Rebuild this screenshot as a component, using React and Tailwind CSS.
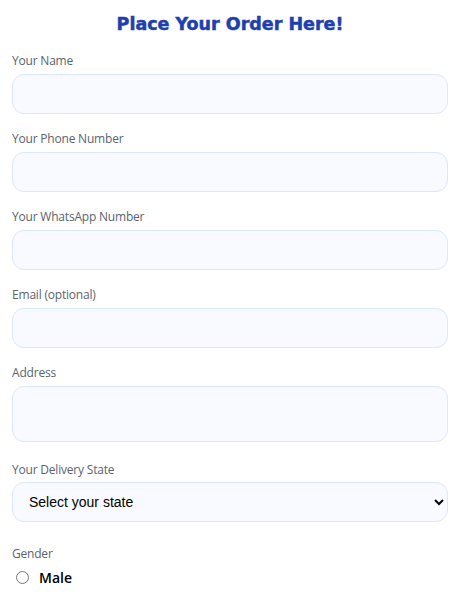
import React from "react";

const labelCls = "block text-[12px] leading-[16px] mb-[5px] text-[#5b636e] font-medium tracking-[-0.2px] font-['Open_Sans',sans-serif]";
const inputCls = "block w-full h-[40px] rounded-xl border border-[#dbe7fc] bg-[#f8faff] px-3 outline-none";

function Field({ label, children, mb = "mb-[17px]" }) {
  return (
    <div className={mb}>
      <label className={labelCls}>{label}</label>
      {children}
    </div>
  );
}

export default function App() {
  return (
    <div className="bg-white w-[460px] h-[597px] overflow-hidden px-3 pt-[10px]">
      <h1 className="text-center text-[17.5px] leading-[28px] font-bold text-[#1e40af] mb-[15px] font-['DejaVu_Sans',sans-serif] [-webkit-text-stroke:0.5px_#1e40af]">
        Place Your Order Here!
      </h1>
      <Field label="Your Name">
        <input className={inputCls} />
      </Field>
      <Field label="Your Phone Number">
        <input className={inputCls} />
      </Field>
      <Field label="Your WhatsApp Number">
        <input className={inputCls} />
      </Field>
      <Field label="Email (optional)">
        <input className={inputCls} />
      </Field>
      <Field label="Address" mb="mb-[20px]">
        <textarea className="block w-full h-[56px] rounded-xl border border-[#dbe7fc] bg-[#f8faff] px-3 py-2 outline-none resize-none" />
      </Field>
      <div className="mb-[24px]">
        <label className={labelCls + " !mb-[4px]"}>Your Delivery State</label>
        <select className="block w-full h-[40px] rounded-xl border border-[#dbe7fc] bg-[#f8faff] px-3 text-[14px] text-black font-['Liberation_Sans',Arial,sans-serif] outline-none">
          <option>Select your state</option>
        </select>
      </div>
      <div>
        <label className={labelCls}>Gender</label>
        <label className="flex items-center gap-[10px] pl-[4px]">
          <input type="radio" name="g" className="m-0 w-[13px] h-[13px]" />
          <span className="text-[14px] font-semibold text-black font-['Open_Sans',sans-serif]">Male</span>
        </label>
      </div>
    </div>
  );
}
